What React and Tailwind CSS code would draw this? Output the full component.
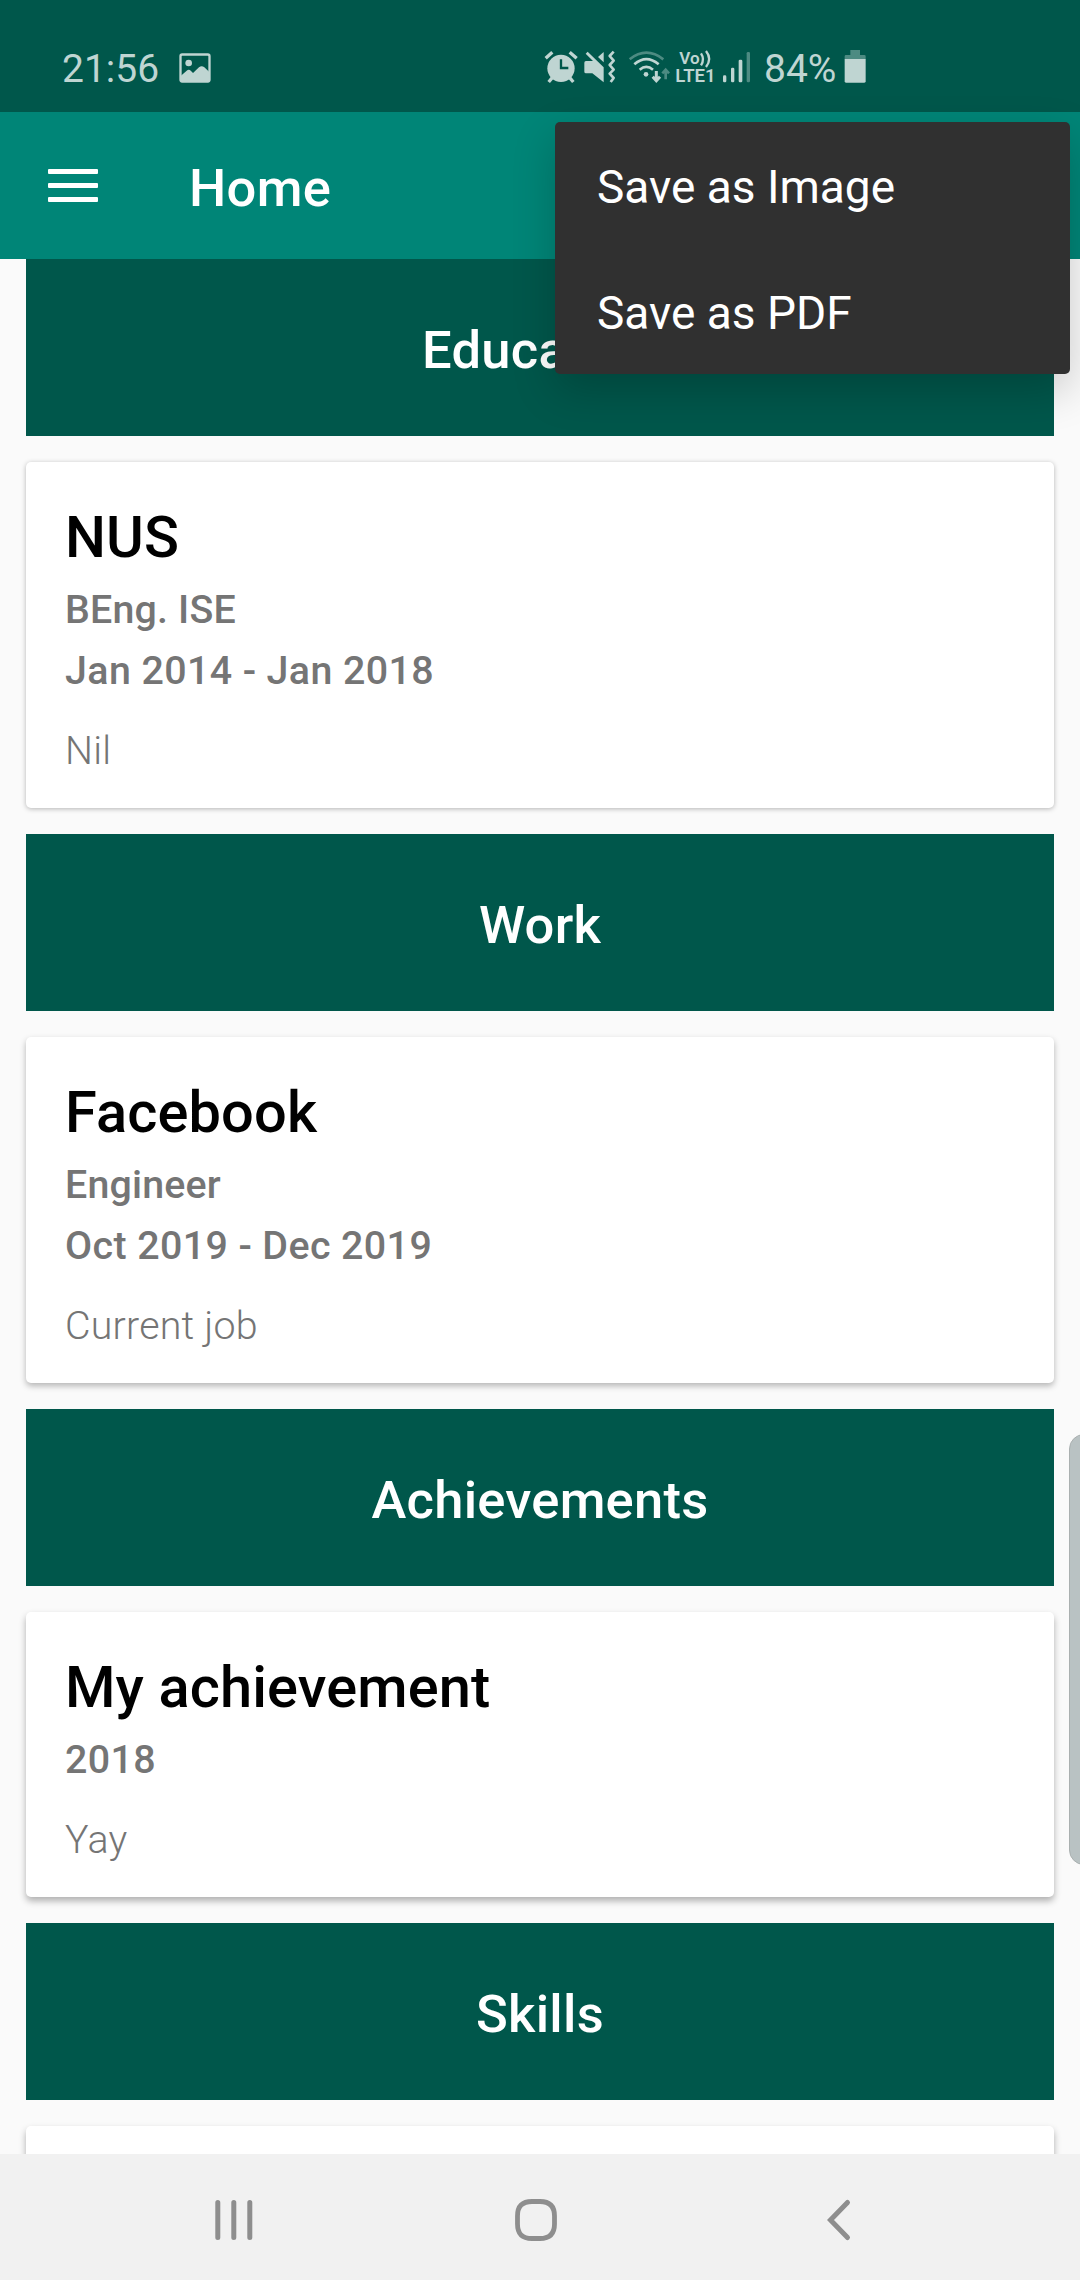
import React from "react";

const ICON = "#bfd5d2";
const DIM = "#4d8b82";

function GalleryIcon() {
  return (
    <svg className="ml-[20px] mt-[-3px]" width="32" height="30" viewBox="0 0 96 90">
      <rect x="4.5" y="4.5" width="87" height="81" rx="5" fill="none" stroke={ICON} strokeWidth="7" />
      <circle cx="29" cy="30" r="10" fill={ICON} />
      <path d="M5 69L23 53Q30 47 36 54L42 60L60 43Q68 36 76 43L91 57V85H5Z" fill={ICON} />
    </svg>
  );
}

function AlarmIcon() {
  return (
    <svg width="34" height="34" viewBox="72 60 102 102" fill="none" stroke={ICON} strokeWidth="10">
      <circle cx="123" cy="115" r="41" fill={ICON} stroke="none" />
      <path d="M77 85L97 67M149 67L170 85" />
      <path d="M97 143L86 156M149 143L160 156" />
      <path d="M123 88V114H145" stroke="#00574b" strokeWidth="7" />
    </svg>
  );
}

function MuteVibrateIcon() {
  return (
    <svg className="ml-[5px]" width="34" height="34" viewBox="189 60 102 102">
      <path d="M197 71L203 65L251 112V157L217 130H198Q193 130 193 125V98Q193 93 198 93H219Z" fill={ICON} />
      <path d="M234 81L251 66V97Z" fill={ICON} />
      <path d="M281 65L269 78L281 92L269 105L281 119L269 131L281 144L272 156" fill="none" stroke={ICON} strokeWidth="8" strokeLinejoin="round" />
    </svg>
  );
}

function WifiIcon() {
  return (
    <svg className="ml-[11px]" width="43" height="34" viewBox="324 60 129 102" fill="none" stroke={ICON} strokeWidth="8">
      <path d="M329 88Q379 48 430 88" stroke={DIM} />
      <path d="M343 103Q379 72 416 103" />
      <path d="M359 119Q379 102 399 119" />
      <circle cx="378" cy="133" r="7" fill={ICON} stroke="none" />
      <path d="M409 123V150M398 140L409 152L420 140" strokeWidth="9" />
      <path d="M437 148V120M427 130L437 119L447 130" stroke={DIM} strokeWidth="8" />
    </svg>
  );
}

function VolteIcon() {
  return (
    <svg className="ml-[4px] overflow-visible" width="42" height="34" viewBox="465 60 126 102" fill={ICON}>
      <g fontFamily="Roboto, sans-serif" fontWeight="600">
        <text x="478" y="102" fontSize="51" textLength="61" lengthAdjust="spacingAndGlyphs">Vo</text>
        <text x="466" y="156" fontSize="53" textLength="121" lengthAdjust="spacingAndGlyphs">LTE1</text>
      </g>
      <path d="M543 70Q555 88 543 106M558 63Q577 87 558 111" fill="none" stroke={ICON} strokeWidth="7" />
    </svg>
  );
}

function SignalIcon() {
  return (
    <svg className="ml-[5px]" width="30" height="34" viewBox="606 60 90 102" fill={ICON}>
      <rect x="609" y="136" width="10" height="21" rx="4" />
      <rect x="633" y="113" width="10" height="44" rx="4" />
      <rect x="656" y="89" width="11" height="68" rx="4" />
      <rect x="680" y="66" width="10" height="91" rx="4" fill={DIM} />
    </svg>
  );
}

function BatteryIcon() {
  return (
    <svg className="ml-[9px]" width="22" height="34" viewBox="973 60 66 102">
      <path d="M992 60H1021V75H1034Q1038 75 1038 79V88H975V79Q975 75 979 75H992Z" fill={DIM} />
      <path d="M975 87H1038V154Q1038 158 1034 158H979Q975 158 975 154Z" fill={ICON} />
    </svg>
  );
}

function StatusBar() {
  return (
    <div className="flex h-[112px] items-start bg-[#00574b] pl-[62px] text-[39px] leading-[46px] text-[#bfd5d2]">
      <div className="mt-[46px] flex h-[46px] w-[482px] items-center">
        <span>21:56</span>
        <GalleryIcon />
      </div>
      <div className="mt-[50px] flex h-[34px] items-center">
        <AlarmIcon />
        <MuteVibrateIcon />
        <WifiIcon />
        <VolteIcon />
        <SignalIcon />
        <span className="ml-[12px] w-[71px] pt-[4px] whitespace-nowrap">84%</span>
        <BatteryIcon />
      </div>
    </div>
  );
}

function Banner({ children }) {
  return (
    <h2 className="flex h-[177px] shrink-0 items-center justify-center bg-[#00574b] pt-[5px] text-[52.5px] font-medium tracking-[0.25px] text-white">
      {children}
    </h2>
  );
}

function Card({ title, lines = [], dates, note, shadow }) {
  return (
    <div className={"shrink-0 rounded-[5px] bg-white px-[39px] pt-[41px] pb-[27px] " + shadow}>
      <div className="h-[76px] text-[57.75px] leading-[68px] font-medium tracking-[0.12px] text-black">{title}</div>
      {lines.map((line) => (
        <div key={line} className="text-[39.375px] leading-[61px] font-medium tracking-[0.18px] text-[#757575]">{line}</div>
      ))}
      <div className="text-[39.375px] leading-[61px] font-medium tracking-[0.4px] text-[#757575]">{dates}</div>
      <div className="mt-[19px] text-[39.375px] leading-[61px] font-light tracking-[0.2px] text-[#757575]">{note}</div>
    </div>
  );
}

function OverflowMenu() {
  return (
    <div className="absolute top-[122px] left-[555px] h-[252px] w-[515px] rounded-[5px] bg-[#303030] text-[46px] text-white shadow-[0_16px_44px_rgba(0,0,0,0.2)]">
      <div className="flex h-[126px] items-center pt-[5px] pl-[42px]">Save as Image</div>
      <div className="flex h-[126px] items-center pt-[5px] pl-[42px]">Save as PDF</div>
    </div>
  );
}

function NavBar() {
  return (
    <div className="flex h-[126px] items-center bg-[#f1f1f1] pt-[6px] pl-[213px]">
      <svg width="42" height="44" viewBox="0 0 42 44" stroke="#8e8e8e" strokeWidth="5" strokeLinecap="round">
        <path d="M4.8 4.5V39.5M20.8 4.5V39.5M36.8 4.5V39.5" />
      </svg>
      <svg className="ml-[259px]" width="44" height="44" viewBox="0 0 44 44" fill="none" stroke="#8e8e8e" strokeWidth="4.8">
        <path d="M18 3.5H26Q40.500 3.500 40.500 18V26Q40.500 40.500 26 40.500H18Q3.500 40.500 3.500 26V18Q3.500 3.500 18 3.500Z" />
      </svg>
      <svg className="ml-[265px]" width="30" height="44" viewBox="0 0 30 44" fill="none" stroke="#8e8e8e" strokeWidth="5" strokeLinecap="round">
        <path d="M24.500 4.500L7.500 22L24.500 39.500" />
      </svg>
    </div>
  );
}

export default function App() {
  return (
    <div className="relative flex h-[2280px] w-[1080px] flex-col overflow-hidden bg-[#fafafa] font-['Roboto',sans-serif]">
      <StatusBar />
      <header className="flex h-[147px] items-center bg-[#008577] pl-[48px]">
        <div className="mt-[-1px] flex flex-col gap-[9px]">
          <div className="h-[5px] w-[50px] rounded-[1px] bg-white" />
          <div className="h-[5px] w-[50px] rounded-[1px] bg-white" />
          <div className="h-[5px] w-[50px] rounded-[1px] bg-white" />
        </div>
        <h1 className="ml-[91px] pt-[5px] text-[52.5px] font-medium tracking-[0.3px] text-white">Home</h1>
      </header>
      <main className="flex h-[1895px] flex-col gap-[26px] overflow-hidden px-[26px]">
        <Banner>Education</Banner>
        <Card title="NUS" lines={["BEng. ISE"]} dates="Jan 2014 - Jan 2018" note="Nil" shadow="shadow-[0_1px_5px_rgba(0,0,0,0.28)]" />
        <Banner>Work</Banner>
        <Card title="Facebook" lines={["Engineer"]} dates="Oct 2019 - Dec 2019" note="Current job" shadow="shadow-[0_3px_6px_rgba(0,0,0,0.28)]" />
        <Banner>Achievements</Banner>
        <Card title="My achievement" dates="2018" note="Yay" shadow="shadow-[0_4px_7px_rgba(0,0,0,0.3)]" />
        <Banner>Skills</Banner>
        <div className="h-[200px] shrink-0 rounded-[5px] bg-white shadow-[0_4px_7px_rgba(0,0,0,0.3)]" />
      </main>
      <NavBar />
      <div className="absolute top-[1434px] left-[1069px] h-[431px] w-[30px] rounded-[15px] border border-[#aab0b0] bg-[#b9c2c3]" />
      <OverflowMenu />
    </div>
  );
}
